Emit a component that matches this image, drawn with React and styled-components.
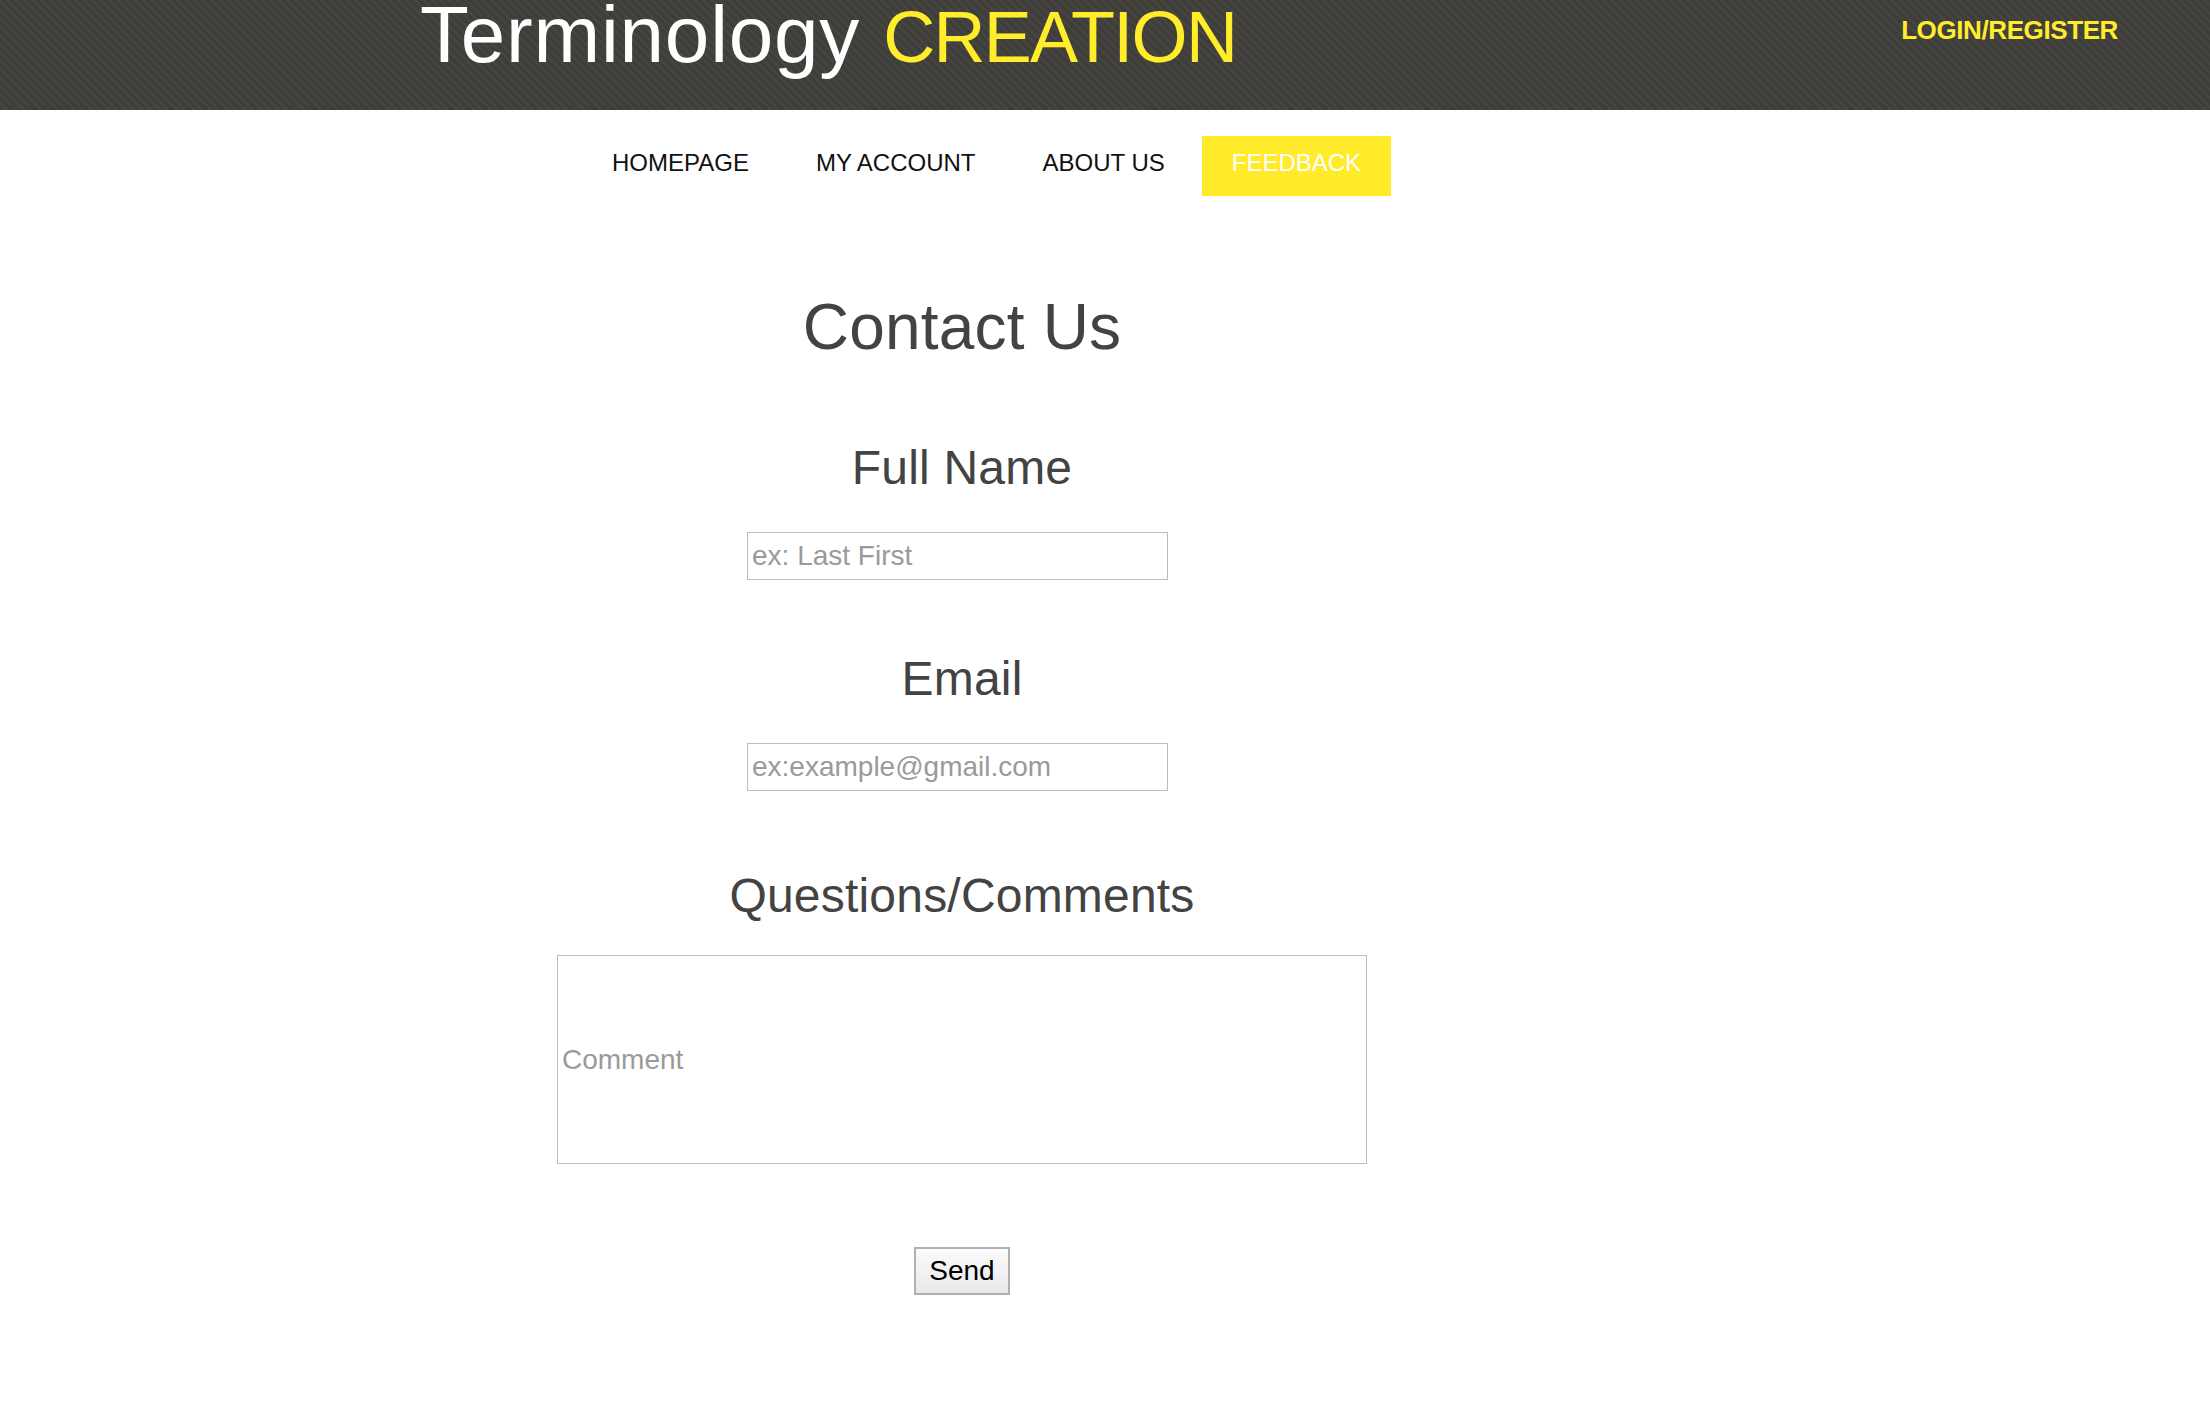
import styled, { createGlobalStyle } from 'styled-components';

// Base page styles: no body margin, a sans-serif by default.
const GlobalStyle = createGlobalStyle`
  html, body {
    margin: 0;
    padding: 0;
    background: #ffffff;
    font-family: "Liberation Sans", Arial, sans-serif;
  }
`;

// Dark striped band at the top of the page.
const Header = styled.header`
  height: 110px;
  display: flex;
  justify-content: space-between;
  align-items: flex-start;
  padding: 0 92px 0 420px;
  box-sizing: border-box;
  background: repeating-linear-gradient(
    45deg,
    #3f3e3a 0px,
    #3f3e3a 4px,
    #464540 4px,
    #464540 6px
  );
`;

const Brand = styled.h1`
  margin: 0;
  font-size: 80px;
  line-height: 70px;
  font-weight: 400;
  letter-spacing: 0.8px;
  color: #ffffff;
  white-space: nowrap;
`;

const BrandAccent = styled.span`
  font-size: 72px;
  letter-spacing: -1.7px;
  color: #ffec2b;
`;

const LoginLink = styled.a`
  margin-top: 15px;
  font-size: 26px;
  font-weight: 700;
  letter-spacing: -0.4px;
  color: #ffec2b;
  text-decoration: none;
  cursor: pointer;
`;

// Menu row under the header.
const Nav = styled.nav`
  display: flex;
  gap: 7px;
  margin-top: 26px;
  padding-left: 582px;
`;

const NavItem = styled.a`
  display: block;
  height: 60px;
  padding: 0 30px 6px;
  box-sizing: border-box;
  line-height: 54px;
  font-size: 24px;
  color: ${(p) => (p.$active ? '#ffffff' : '#111111')};
  background: ${(p) => (p.$active ? '#ffeb29' : 'transparent')};
  text-decoration: none;
  cursor: pointer;
`;

// Contact form column.
const Main = styled.main`
  width: 1924px;
  display: flex;
  flex-direction: column;
  align-items: center;
`;

const Title = styled.h2`
  margin: ${(p) => p.$top}px 0 0;
  font-size: ${(p) => p.$size}px;
  line-height: 1;
  font-weight: 400;
  letter-spacing: 0.2px;
  color: #434343;
`;

const Field = styled.input`
  display: block;
  margin: ${(p) => p.$top}px ${(p) => p.$shift || 0}px 0 0;
  width: ${(p) => p.$width}px;
  height: ${(p) => p.$height}px;
  box-sizing: border-box;
  padding: 0 4px;
  border: 1px solid #bdbdbd;
  border-radius: 0;
  font-family: "Liberation Sans", Arial, sans-serif;
  font-size: 28px;
  color: #222;
  outline: none;

  &::placeholder {
    color: #9a9a9a;
  }
`;

const SendButton = styled.button`
  margin: 83px 0 112px;
  height: 48px;
  padding: 0 13px;
  border: 2px solid #b0b0b0;
  border-radius: 0;
  background: linear-gradient(#fbfbfb, #e9e9e9);
  font-family: "Liberation Sans", Arial, sans-serif;
  font-size: 28px;
  color: #000;
  cursor: pointer;
`;

const navLinks = [
  { label: 'HOMEPAGE' },
  { label: 'MY ACCOUNT' },
  { label: 'ABOUT US' },
  { label: 'FEEDBACK', active: true },
];

export default function App() {
  return (
    <>
      <GlobalStyle />
      <Header>
        <Brand>
          Terminology <BrandAccent>CREATION</BrandAccent>
        </Brand>
        <LoginLink>LOGIN/REGISTER</LoginLink>
      </Header>

      <Nav>
        {navLinks.map((link) => (
          <NavItem key={link.label} $active={link.active}>
            {link.label}
          </NavItem>
        ))}
      </Nav>

      <Main>
        <Title $size={64} $top={99}>Contact Us</Title>

        <Title $size={48} $top={85}>Full Name</Title>
        <Field $top={40} $width={421} $height={48} $shift={9} placeholder="ex: Last First" />

        <Title $size={48} $top={75}>Email</Title>
        <Field $top={40} $width={421} $height={48} $shift={9} placeholder="ex:example@gmail.com" />

        <Title $size={48} $top={81}>Questions/Comments</Title>
        <Field $top={35} $width={810} $height={209} placeholder="Comment" />

        <SendButton type="button">Send</SendButton>
      </Main>
    </>
  );
}
